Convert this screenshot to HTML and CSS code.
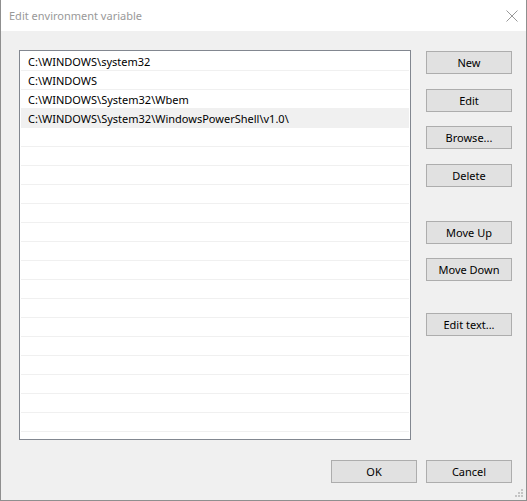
FILE: index.html
```html
<!DOCTYPE html>
<html>
<head>
<meta charset="utf-8">
<link rel="stylesheet" href="styles.css">
</head>
<body>
<div class="window">
  <div class="titlebar">
    <span class="title">Edit environment variable</span>
    <svg class="close" width="12" height="12" viewBox="0 0 12 12"><path d="M0.5 0.5 L11.5 11.5 M11.5 0.5 L0.5 11.5" stroke="#999" stroke-width="1" fill="none"/></svg>
  </div>
  <div class="body">
    <div class="main">
      <div class="list">
        <div class="row">C:\WINDOWS\system32</div>
        <div class="row">C:\WINDOWS</div>
        <div class="row">C:\WINDOWS\System32\Wbem</div>
        <div class="row sel">C:\WINDOWS\System32\WindowsPowerShell\v1.0\</div>
        <div class="row"></div><div class="row"></div><div class="row"></div><div class="row"></div>
        <div class="row"></div><div class="row"></div><div class="row"></div><div class="row"></div>
        <div class="row"></div><div class="row"></div><div class="row"></div><div class="row"></div>
        <div class="row"></div><div class="row"></div><div class="row"></div><div class="row"></div>
        <div class="row"></div>
      </div>
      <div class="side">
        <div class="group">
          <button class="btn">New</button>
          <button class="btn">Edit</button>
          <button class="btn">Browse...</button>
          <button class="btn">Delete</button>
        </div>
        <div class="group move">
          <button class="btn">Move Up</button>
          <button class="btn">Move Down</button>
        </div>
        <div class="group last">
          <button class="btn">Edit text...</button>
        </div>
      </div>
    </div>
    <div class="footer">
      <button class="btn">OK</button>
      <button class="btn">Cancel</button>
    </div>
  </div>
  <svg class="grip" width="10" height="10" viewBox="0 0 10 10">
    <rect x="7" y="1" width="2" height="2" fill="#c4c4c4"/>
    <rect x="4" y="4" width="2" height="2" fill="#c4c4c4"/>
    <rect x="7" y="4" width="2" height="2" fill="#c4c4c4"/>
    <rect x="1" y="7" width="2" height="2" fill="#c4c4c4"/>
    <rect x="4" y="7" width="2" height="2" fill="#c4c4c4"/>
    <rect x="7" y="7" width="2" height="2" fill="#c4c4c4"/>
  </svg>
</div>
</body>
</html>
```
FILE: styles.css
```css
html, body {
  margin: 0;
  padding: 0;
  background: #f0f0f0;
}
.window {
  position: relative;
  width: 527px;
  height: 501px;
  box-sizing: border-box;
  border: 1px solid #8f8f8f;
  border-top: none;
  background: #f0f0f0;
  font-family: "Noto Sans", "Open Sans", sans-serif;
  font-size: 11px;
  color: #000;
  display: flex;
  flex-direction: column;
}
.titlebar {
  height: 31px;
  background: #fff;
  display: flex;
  align-items: center;
  justify-content: space-between;
  padding: 0 8px 0 8px;
  flex: none;
}
.title {
  color: #999;
  font-size: 11px;
}
.body {
  flex: 1;
  display: flex;
  flex-direction: column;
  padding: 19px 14px 0 18px;
}
.main {
  display: flex;
  gap: 15px;
}
.list {
  width: 392px;
  height: 390px;
  box-sizing: border-box;
  border: 1px solid #828790;
  background: #fff;
  overflow: hidden;
  padding: 1px 1px 0 1px;
}
.row {
  height: 18px;
  line-height: 19px;
  border-bottom: 1px solid #f0f0f0;
  padding-left: 7px;
  white-space: nowrap;
}
.row.sel {
  background: #f0f0f0;
}
.side {
  display: flex;
  flex-direction: column;
  padding-top: 1px;
}
.group {
  display: flex;
  flex-direction: column;
  gap: 14.5px;
}
.group.move {
  margin-top: 34px;
  gap: 14px;
}
.group.last {
  margin-top: 32px;
}
.btn {
  width: 86px;
  height: 23px;
  box-sizing: border-box;
  border: 1px solid #adadad;
  background: #e1e1e1;
  font-family: inherit;
  font-size: 11px;
  color: #000;
  padding: 0;
  margin: 0;
  line-height: 21px;
}
.footer {
  display: flex;
  justify-content: flex-end;
  gap: 9px;
  margin-top: 20px;
}
.grip {
  position: absolute;
  right: 2px;
  bottom: 2px;
}
```
